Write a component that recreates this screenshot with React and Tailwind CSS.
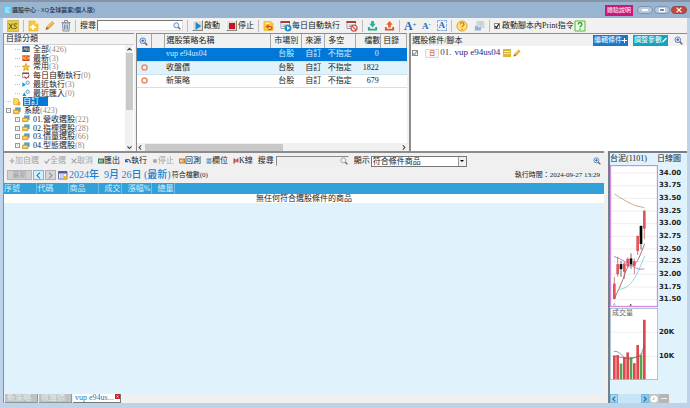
import React, { useState } from "react";

const strategies = [
  { name: "vup e94us04", market: "台股", source: "自訂", side: "不指定", count: 0 },
  { name: "收盤價", market: "台股", source: "自訂", side: "不指定", count: 1822 },
  { name: "新策略", market: "台股", source: "自訂", side: "不指定", count: 679 },
];

const tree = [
  { label: "全部", count: 426, icon: "all", level: 1 },
  { label: "最新", count: 3, icon: "new", level: 1 },
  { label: "常用", count: 3, icon: "star", level: 1 },
  { label: "每日自動執行", count: 0, icon: "daily", level: 1 },
  { label: "最近執行", count: 3, icon: "run", level: 1 },
  { label: "最近匯入", count: 0, icon: "import", level: 1 },
  { label: "自訂", icon: "custom", level: 0 },
  { label: "系統", count: 423, icon: "folder", level: 0, expand: "-" },
  { label: "01.營收選股", count: 22, icon: "folder", level: 1, expand: "+" },
  { label: "02.指標選股", count: 28, icon: "folder", level: 1, expand: "+" },
  { label: "03.價量選股", count: 66, icon: "folder", level: 1, expand: "+" },
  { label: "04.型態選股", count: 8, icon: "folder", level: 1, expand: "+" },
];

const prices = ["34.00", "33.75", "33.50", "33.25", "33.00", "32.75", "32.50", "32.25", "32.00", "31.75", "31.50"];

// x, wick top, body top, body bottom, wick bottom, up
const candles = [
  [40, 380, 400, 446, 446, true],
  [50, 320, 342, 372, 380, true],
  [60, 333, 342, 357, 380, false],
  [70, 335, 340, 365, 386, true],
  [80, 322, 326, 348, 352, true],
  [90, 310, 325, 343, 356, false],
  [100, 325, 333, 348, 372, true],
  [110, 256, 258, 303, 315, true],
  [120, 226, 228, 282, 298, false],
  [130, 180, 183, 236, 267, true],
];

const volumes = [
  [40, 181, true],
  [50, 180, true],
  [60, 205, false],
  [70, 186, true],
  [80, 172, true],
  [90, 187, false],
  [100, 204, true],
  [110, 150, true],
  [120, 180, false],
  [130, 75, true],
];

const Magnifier = ({ className = "w-2 h-2", color = "#4c7fc0", plus }) => (
  <svg viewBox="0 0 24 24" className={`shrink-0 ${className}`} fill="none">
    <path d="M15 15l7 7" stroke="#8a5a4a" strokeWidth="4" />
    <circle cx="10" cy="10" r="7.5" fill="#e8f2fc" stroke={color} strokeWidth="2.5" />
    {plus && <path d="M6 10h8M10 6v8" stroke="#2a5ca8" strokeWidth="2.5" />}
  </svg>
);

const Pencil = ({ className = "w-[10px] h-[11px]", color = "#f0a92c" }) => (
  <svg viewBox="0 0 24 24" className={`shrink-0 ${className}`}>
    <path d="M2 22l2-7L17 2l5 5L9 20z" fill={color} stroke="#c48a35" strokeWidth="1" />
    <path d="M2 22l2-7 5 5z" fill="#7d6a4c" />
    <path d="M6 16L18 4" stroke="#ffe48c" strokeWidth="2" />
  </svg>
);

const XsIcon = () => (
  <svg viewBox="0 0 24 24" className="w-3 h-3 shrink-0">
    <path d="M1 1h22v22H1z" fill="#e8cb3c" stroke="#b39a26" strokeWidth="1" />
    <path d="M4 7l7 11M11 7L4 18M20 8c-6-2-8 3-4 4s5 6-3 5" fill="none" stroke="#5c5321" strokeWidth="2" />
  </svg>
);

const AddIcon = () => (
  <svg viewBox="0 0 24 24" className="w-[11px] h-3 shrink-0">
    <path d="M2 1h13l7 7v15H2z" fill="#fbc83a" stroke="#e0a51c" />
    <path d="M15 1v7h7" fill="#fff3bd" stroke="#e0a51c" />
    <path d="M11 9v11M5 14.500h12" stroke="#fff" strokeWidth="4" />
  </svg>
);

const TrashIcon = () => (
  <svg viewBox="0 0 20 24" className="w-[10px] h-3 shrink-0" fill="none" stroke="#8793a3" strokeWidth="2">
    <path d="M3 6l1 16h12l1-16z" fill="#dce3ea" />
    <path d="M1 5h18M7 4V1h6v3M7 9v10M10 9v10M13 9v10" />
  </svg>
);

const BackIcon = () => (
  <svg viewBox="0 0 24 24" className="w-[11px] h-3 shrink-0">
    <path d="M2 2h15l5 5v15H2z" fill="#f7c935" stroke="#d6a21c" />
    <path d="M8 13h8c5 0 5 7-1 7h-3" fill="none" stroke="#d3492c" strokeWidth="2.500" />
    <path d="M12 8l-6 5 6 5z" fill="#d3492c" />
    <path d="M5 6h10" stroke="#fff3bd" strokeWidth="3" />
  </svg>
);

const CalendarIcon = ({ blocked, className = "w-3 h-3" }) => (
  <svg viewBox="0 0 24 24" className={`shrink-0 ${className}`}>
    <path d="M2 3h17v14H2z" fill="#fff" stroke="#7b7f8c" strokeWidth="1.500" />
    <path d="M1 2h19v4H1z" fill="#b33a3a" />
    <path d="M5 10h10M5 13h6" stroke="#9aa" strokeWidth="2" />
    {blocked ? (
      <g fill="#fff" stroke="#d65050" strokeWidth="2.500">
        <circle cx="16" cy="16" r="6" />
        <path d="M12 12l8 8" />
      </g>
    ) : (
      <g>
        <circle cx="16" cy="16" r="7" fill="#2395c4" />
        <path d="M14 12l6 4-6 4z" fill="#fff" />
      </g>
    )}
  </svg>
);

const TrayIcon = ({ up }) => (
  <svg viewBox="0 0 24 24" className="w-[11px] h-3 shrink-0">
    <path d="M2 14v8h20v-8h-4v4H6v-4z" fill={up ? "#d8552d" : "#2aa58b"} />
    <path d={up ? "M12 1l7 8h-4v6H9V9H5z" : "M12 15l7-8h-4V1H9v6H5z"} fill={up ? "#e2622f" : "#2bb09a"} />
  </svg>
);

const HelpIcon = ({ square }) => (
  <svg viewBox="0 0 24 24" className="w-3 h-3 shrink-0">
    {square ? (
      <path d="M2 2h20v20H2z" fill="#eafbe4" stroke="#55b83e" strokeWidth="2" />
    ) : (
      <circle cx="12" cy="12" r="10" fill="#ffe27a" stroke="#dfa02a" strokeWidth="2" />
    )}
    <path
      d="M8.500 9c0-5 7.500-4.500 7.500-.5 0 3-4 3-4 6M12 17v2.500"
      fill="none"
      stroke={square ? "#249a18" : "#c8811c"}
      strokeWidth="2.500"
    />
  </svg>
);

const SaveIcon = () => (
  <svg viewBox="0 0 24 24" className="w-[11px] h-3 shrink-0">
    <path d="M6 2h16v14H6z" fill="#d8dce2" stroke="#b9c0c8" />
    <path d="M9 5h10M9 8h10M15 2v14" stroke="#b4bac4" />
    <path d="M2 12h5l2 3h6v7H2z" fill="#8eb2d8" />
  </svg>
);

const TreeIcon = ({ type }) => (
  <svg viewBox="0 0 24 24" className="w-2 h-2 shrink-0">
    {type === "all" && (
      <g>
        <path d="M1 4h22v17H1z" fill="#1d4f9e" />
        <path d="M5 16l3-8 3 8M13 8v8h3M18 8v8h3" stroke="#f3e9a0" strokeWidth="2" fill="none" />
      </g>
    )}
    {type === "new" && (
      <g>
        <path d="M1 4h22v17H1z" fill="#d4471c" />
        <path d="M4 16V8l4 8V8M15 8h-4v8h4M17 8l1 8 2-5 2 5V8" stroke="#ffd86b" strokeWidth="2" fill="none" />
      </g>
    )}
    {type === "star" && (
      <path d="M12 1l3 8 8 .5-6 5 2 8.500-7-5-7 5 2-8.500-6-5L9 9z" fill="#ffc52e" stroke="#d48e14" strokeWidth="2" />
    )}
    {type === "daily" && (
      <g>
        <path d="M2 3h18v14H2z" fill="#fff" stroke="#666" strokeWidth="2" />
        <path d="M1 2h20v4H1z" fill="#a83838" />
        <path d="M8 13l4 7 10-9" stroke="#c83232" strokeWidth="3" fill="none" />
      </g>
    )}
    {(type === "run" || type === "import") && (
      <g>
        <path d={type === "run" ? "M1 7l11 7-11 7z" : "M1 21l6-11 6 11z"} fill="#1c9bd0" />
        <circle cx="17" cy="8" r="5" fill="#e8f4fb" stroke="#4f94b8" strokeWidth="2.500" />
      </g>
    )}
    {type === "custom" && (
      <g>
        <path d="M2 2h12l4 4v14H2z" fill="#ffd95a" stroke="#dd9d1c" strokeWidth="2" />
        <path d="M14 12h8v10h-8z" fill="#f6a52a" />
      </g>
    )}
    {type === "folder" && (
      <g>
        <path d="M7 2h15v12H7z" fill="#4fa5d6" stroke="#2e7fb3" />
        <path d="M1 9h17v11H1z" fill="#f3c13a" stroke="#bd8d1c" strokeWidth="2" />
        <path d="M4 14h11" stroke="#fff2b8" strokeWidth="2" />
      </g>
    )}
  </svg>
);

const Sep = () => <span className="w-px h-3 mx-1 bg-[#bdbdbd] shrink-0" />;

const IconButton = ({ label, children }) => (
  <button type="button" aria-label={label} className="shrink-0 flex items-center">
    {children}
  </button>
);

const TitleBar = () => (
  <header className="h-[18px] shrink-0 flex items-center bg-[#99b4d1] border-t-2 border-[#8595a6] pl-1 pr-[3px] text-[6px] text-[#1c2e44]">
    <svg viewBox="0 0 14 16" className="w-[7px] h-2 mr-px">
      <path d="M0 0h14v16H0z" fill="#63c8ec" />
      <path d="M2 4h10M2 8h7M2 12h10" stroke="#d9f4ff" strokeWidth="2" />
    </svg>
    <h1 className="flex-1 font-medium font-['Open_Sans','Noto_Sans_CJK_TC',sans-serif]">選股中心 - XQ全球贏家(個人版)</h1>
    <button type="button" className="h-[11px] w-7 mr-1 bg-[#c9187a] text-white leading-[11px]">
      體驗說明
    </button>
    <div className="flex gap-px">
      <button type="button" aria-label="最小化" className="w-4 h-2 rounded-sm border border-[#7d93ad] bg-[#b5c9df] flex items-center justify-center">
        <span className="w-[6px] h-[2px] bg-white" />
      </button>
      <button type="button" aria-label="最大化" className="w-4 h-2 rounded-sm border border-[#7d93ad] bg-[#b5c9df] flex items-center justify-center">
        <span className="w-[6px] h-1 border border-white bg-[#7388a1]" />
      </button>
      <button type="button" aria-label="關閉" className="w-4 h-2 rounded-sm border border-[#8e4a48] bg-[#c9483c] flex items-center justify-center">
        <svg viewBox="0 0 10 10" className="w-[6px] h-[6px]">
          <path d="M1 1l8 8M9 1L1 9" stroke="#fff" strokeWidth="2" />
        </svg>
      </button>
    </div>
  </header>
);

const Toolbar = () => {
  const [print, setPrint] = useState(true);

  return (
    <div className="h-[15px] shrink-0 flex items-center bg-[#f1f1f1] pl-1 whitespace-nowrap leading-3">
      <IconButton label="XS">
        <XsIcon />
      </IconButton>
      <Sep />
      <div className="flex items-center gap-[6px]">
        <IconButton label="新增"><AddIcon /></IconButton>
        <IconButton label="編輯"><Pencil /></IconButton>
        <IconButton label="刪除"><TrashIcon /></IconButton>
      </div>
      <Sep />
      <label htmlFor="search" className="mr-px">搜尋</label>
      <div className="flex items-center w-[86px] h-[11px] bg-white border border-[#777] border-r-[#ddd] border-b-[#ddd] pr-px">
        <input id="search" type="text" className="flex-1 min-w-0 h-full outline-none" />
        <Magnifier />
      </div>
      <Sep />
      <div className="flex items-center gap-[6px]">
        <button type="button" className="flex items-center gap-px">
          <span className="w-[11px] h-[11px] flex items-center justify-center bg-[#dcdcdc] border border-[#f8f8f8] border-r-[#888] border-b-[#888]">
            <svg viewBox="0 0 10 10" className="w-2 h-2">
              <path d="M2 0l7 5-7 5z" fill="#1b87c9" />
            </svg>
          </span>
          啟動
        </button>
        <button type="button" className="flex items-center gap-px">
          <span className="w-[11px] h-[11px] flex items-center justify-center bg-[#dcdcdc] border border-[#f8f8f8] border-r-[#888] border-b-[#888]">
            <span className="w-[6px] h-[6px] bg-[#c8141e]" />
          </span>
          停止
        </button>
      </div>
      <Sep />
      <div className="flex items-center gap-[6px]">
        <IconButton label="還原"><BackIcon /></IconButton>
        <button type="button" className="flex items-center">
          <CalendarIcon />
          每日自動執行
        </button>
        <IconButton label="取消自動執行"><CalendarIcon blocked /></IconButton>
      </div>
      <Sep />
      <div className="flex items-center gap-[6px]">
        <IconButton label="匯入"><TrayIcon /></IconButton>
        <IconButton label="匯出"><TrayIcon up /></IconButton>
      </div>
      <Sep />
      <div className="flex items-center gap-[6px] font-bold text-[#2364b5] font-['Liberation_Serif',serif]">
        <button type="button" className="text-[12px]">A<sup className="text-[6px]">+</sup></button>
        <button type="button" className="text-[9px]">A<sup className="text-[6px]">-</sup></button>
        <button type="button" className="text-[9px] px-px border border-dashed border-[#8db0dc] leading-[9px]">A</button>
      </div>
      <Sep />
      <div className="flex items-center gap-[6px]">
        <IconButton label="說明"><HelpIcon /></IconButton>
        <IconButton label="儲存"><SaveIcon /></IconButton>
      </div>
      <Sep />
      <label className="flex items-center gap-[2px]">
        <CheckBox checked={print} onChange={() => setPrint(!print)} />
        啟動腳本內Print指令
      </label>
      <IconButton label="指令說明"><HelpIcon square /></IconButton>
    </div>
  );
};

const CheckBox = ({ checked, onChange, label, mark = "#222" }) => (
  <span className="relative w-[6px] h-[6px] shrink-0">
    <input
      type="checkbox"
      aria-label={label}
      checked={checked}
      onChange={onChange}
      className="block appearance-none w-[6px] h-[6px] bg-white border border-[#888]"
    />
    {checked && (
      <svg viewBox="0 0 10 10" className="absolute inset-0 pointer-events-none">
        <path d="M2 5l2 3 4-6" fill="none" stroke={mark} strokeWidth="2" />
      </svg>
    )}
  </span>
);

const DirectoryTree = () => {
  const [selected, setSelected] = useState("自訂");

  return (
    <section className="w-[131px] shrink-0 flex flex-col bg-white border-t border-l border-[#8c8c8c]">
      <h2 className="h-[11px] shrink-0 px-[2px] leading-[10px] bg-[#f4f4f4] border-b border-[#cfcfcf]">目錄分類</h2>
      <div className="flex-1 min-h-0 flex">
        <ul className="flex-1 min-w-0 flex flex-col pl-px pb-px whitespace-nowrap">
          {tree.map((item) => (
            <li key={item.label} className="flex-1 min-h-0 flex items-center">
              <span className={`shrink-0 flex items-center justify-end ${item.level ? "w-[15px]" : "w-[6px]"}`}>
                {item.expand ? (
                  <span className="w-[5px] h-[5px] border border-[#999] flex items-center justify-center text-[5px] leading-none">
                    {item.expand}
                  </span>
                ) : (
                  <span className="w-[5px] border-t border-dotted border-[#bbb]" />
                )}
              </span>
              <button type="button" onClick={() => setSelected(item.label)} className="flex items-center leading-[9px] ml-[2px]">
                <TreeIcon type={item.icon} />
                <span className={selected === item.label ? "bg-[#0078d7] text-white ml-[2px] pr-[9px]" : "ml-[3px]"}>
                  {item.label}
                </span>
                {item.count !== undefined && <span className="text-[#8a8a8a]">({item.count})</span>}
              </button>
            </li>
          ))}
        </ul>
        <div className="w-[8px] mr-px shrink-0 flex flex-col items-center bg-[#f1f1f1]">
          <Chevron className="h-[8px]" d="M2 7l3-3 3 3" />
          <span className="w-[7px] flex-1 bg-[#c9c9c9]" />
          <span className="h-[33px]" />
          <Chevron className="h-[8px]" d="M2 4l3 3 3-3" />
        </div>
      </div>
    </section>
  );
};

const Chevron = ({ d, className = "" }) => (
  <svg viewBox="0 0 10 10" className={`w-[7px] shrink-0 ${className}`}>
    <path d={d} fill="none" stroke="#444" strokeWidth="1.500" />
  </svg>
);

const StrategyTable = () => {
  const [active, setActive] = useState(0);

  return (
    <section className="flex-[49] min-w-0 flex flex-col bg-white border-t border-l border-[#8c8c8c]">
      <table className="w-full table-fixed border-collapse whitespace-nowrap text-left">
        <colgroup>
          <col className="w-[14px]" />
          <col className="w-[13px]" />
          <col />
          <col className="w-[31px]" />
          <col className="w-[23px]" />
          <col className="w-[31px]" />
          <col className="w-[25px]" />
          <col className="w-[26px]" />
        </colgroup>
        <thead>
          <tr className="h-[14px] bg-[#f1f1f1] leading-[12px] [&>th]:font-normal [&>th]:p-0 [&>th]:border-r [&>th]:border-[#a8a8a8]">
            <th><Magnifier plus className="w-[9px] h-[9px] ml-[2px]" /></th>
            <th />
            <th><span className="pl-[2px]">選股策略名稱</span></th>
            <th className="text-center">市場別</th>
            <th className="text-center">來源</th>
            <th><span className="pl-[3px]">多空</span></th>
            <th className="text-right">檔數</th>
            <th><span className="pl-[2px]">目錄</span></th>
          </tr>
        </thead>
        <tbody>
          {strategies.map((s, i) => (
            <tr
              key={s.name}
              onClick={() => setActive(i)}
              className={`h-[13px] leading-[12px] border-b border-[#cfe3ee] [&>td]:p-0 ${
                active === i ? "bg-[#0078d7] text-[#d8ecff]" : i % 2 ? "bg-[#e0f3fd]" : ""
              }`}
            >
              <td>
                {active !== i && (
                  <svg viewBox="0 0 14 14" className="w-[7px] h-[7px] ml-1">
                    <circle cx="7" cy="7" r="5" fill="#fff" stroke="#ec8a68" strokeWidth="3" />
                  </svg>
                )}
              </td>
              <td />
              <td><span className="pl-[2px]">{s.name}</span></td>
              <td className="text-center">{s.market}</td>
              <td className="text-center">{s.source}</td>
              <td><span className="pl-[3px]">{s.side}</span></td>
              <td className="text-right"><span className="pr-[2px]">{s.count}</span></td>
              <td />
            </tr>
          ))}
        </tbody>
      </table>
      <div className="mt-auto h-[8px] shrink-0 flex items-center bg-[#f1f1f1]">
        <Chevron d="M6 2L3 5l3 3" />
        <span className="ml-px w-[51%] h-[7px] bg-[#c9c9c9]" />
        <span className="flex-1" />
        <Chevron d="M4 2l3 3-3 3" />
      </div>
    </section>
  );
};

const ConditionPanel = () => {
  const [enabled, setEnabled] = useState(true);

  return (
    <section className="flex-[50] min-w-0 bg-white border-t border-l-2 border-[#8c8c8c]">
      <div className="h-[12px] flex items-center bg-[#f1f1f1] leading-[11px] pr-1">
        <h2 className="flex-1 pl-px">選股條件/腳本</h2>
        <button type="button" className="h-[11px] w-[35px] mr-[5px] bg-[#1a78cc] text-white text-[7px] flex items-center justify-center">
          編輯條件
          <svg viewBox="0 0 10 10" className="w-[5px] h-[5px]">
            <path d="M5 0v10M0 5h10" stroke="#fff" strokeWidth="2" />
          </svg>
        </button>
        <button type="button" className="h-[11px] w-[35px] mr-[6px] bg-[#0fa5bd] text-white text-[7px] flex items-center justify-center">
          調整參數
          <svg viewBox="0 0 10 10" className="w-[5px] h-[6px]">
            <path d="M1 9l8-8" stroke="#fff" strokeWidth="3" />
          </svg>
        </button>
        <Magnifier plus className="w-[9px] h-[9px]" />
      </div>
      <div className="flex items-center h-[14px] pl-px text-[9px] font-['Liberation_Serif','Noto_Sans_CJK_TC',serif]">
        <CheckBox mark="#999" label="01. vup e94us04" checked={enabled} onChange={() => setEnabled(!enabled)} />
        <span className="ml-[7px] w-[14px] h-[9px] text-[6px] leading-[7px] text-center text-[#c0392b] border border-[#dadada] bg-[#faf6f6]">日</span>
        <span className="ml-px text-[#444]">01.</span>
        <a href="#script" className="ml-[3px] text-[#25258f]">vup e94us04</a>
        <svg viewBox="0 0 16 16" className="w-2 h-2 ml-[3px]">
          <path d="M0 0h16v16H0z" fill="#d9b83c" />
          <path d="M2 5h12M2 9h12" stroke="#f5e6a4" strokeWidth="2" />
        </svg>
        <Pencil className="w-2 h-2 ml-[2px]" />
      </div>
    </section>
  );
};

const actions = [
  { label: "加自選", disabled: true, d: "M5 1v8M1 5h8", color: "#a5a5a5" },
  { label: "全選", disabled: true, d: "M1 5l3 4 5-7", color: "#a5a5a5" },
  { label: "取消", disabled: true, d: "M1 1l8 8M9 1L1 9", color: "#a5a5a5" },
  { label: "匯出", d: "M1 2h8v6H1zM3 5h6", color: "#2d7a54" },
  { label: "執行", d: "M1 2v4h4M1 6c2-5 7-5 8 2", color: "#2b62b5" },
  { label: "停止", disabled: true, d: "M2 3h6M2 5h6M2 7h6", color: "#a5a5a5" },
  { label: "回測", d: "M1 2h8v6H1zM4 5h5", color: "#d9782a" },
  { label: "欄位", d: "M1 2h8M1 5h8M1 8h8", color: "#3f83bd" },
  { label: "K線", d: "M2 1v8M5 2v5M8 1v6", color: "#b3262b" },
];

const ResultPanel = () => {
  const [filter, setFilter] = useState("符合條件商品");

  return (
    <section className="flex-1 min-w-0 flex flex-col bg-[#f0f0f0] border-t-2 border-l border-[#8c8c8c]">
      <div className="h-[14px] shrink-0 mt-px flex items-center gap-[5px] pl-[5px] pr-[3px] whitespace-nowrap leading-3">
        {actions.map((a) => (
          <button
            key={a.label}
            type="button"
            disabled={a.disabled}
            className={`flex items-center ${a.disabled ? "text-[#a5a5a5]" : ""}`}
          >
            <svg viewBox="0 0 10 10" className="w-[6px] h-[6px]">
              <path d={a.d} fill="none" stroke={a.color} strokeWidth="2" />
            </svg>
            {a.label}
          </button>
        ))}
        <div className="flex items-center gap-[2px]">
          <label htmlFor="result-search">搜尋</label>
          <div className="flex items-center w-[73px] h-[10px] border border-[#8a8a8a] border-r-[#eee] border-b-[#eee] bg-[#efefef]">
            <input id="result-search" type="text" className="flex-1 min-w-0 h-full outline-none bg-transparent" />
            <Magnifier color="#999" />
          </div>
        </div>
        <div className="flex items-center gap-px">
          <label htmlFor="filter">顯示</label>
          <div className="relative flex w-24 h-[11px] bg-white border border-[#777]">
            <select
              id="filter"
              value={filter}
              onChange={(e) => setFilter(e.target.value)}
              className="appearance-none w-full h-full pl-px outline-none text-[8px] leading-[9px]"
            >
              <option>符合條件商品</option>
            </select>
            <span className="absolute right-0 inset-y-0 w-2 flex items-center justify-center bg-[#f0f0f0] border-l border-[#999] pointer-events-none">
              <svg viewBox="0 0 8 4" className="w-1 h-[2px]">
                <path d="M0 0h8L4 4z" fill="#000" />
              </svg>
            </span>
          </div>
        </div>
        <Magnifier plus className="w-2 h-2 ml-auto" />
      </div>

      <div className="h-[14px] shrink-0 flex items-center pl-[3px] pr-1 whitespace-nowrap leading-3">
        <button type="button" disabled className="w-[25px] h-[10px] leading-[9px] mr-px bg-[#cfcfcf] border border-[#b5b5b5] text-[#a0a0a0] text-[7px] flex items-center justify-center">
          最新
        </button>
        <button type="button" aria-label="前一日" className="w-[11px] h-[10px] mr-px bg-[#d5eefa] border border-[#85b4cc] flex items-center justify-center">
          <svg viewBox="0 0 10 10" className="w-[7px] h-[7px]">
            <path d="M7 1L3 5l4 4" fill="none" stroke="#1674b8" strokeWidth="1.500" />
          </svg>
        </button>
        <button type="button" aria-label="後一日" disabled className="w-[11px] h-[10px] mr-[2px] bg-[#d6d6d6] border border-[#b0b0b0] flex items-center justify-center">
          <svg viewBox="0 0 10 10" className="w-[7px] h-[7px]">
            <path d="M3 1l4 4-4 4" fill="none" stroke="#888" strokeWidth="1.500" />
          </svg>
        </button>
        <svg viewBox="0 0 20 20" className="w-[10px] h-[10px] mr-px">
          <path d="M1 3h17v15H1z" fill="#eef" stroke="#6b6bb0" strokeWidth="2" />
          <path d="M1 2h17v5H1z" fill="#5757a5" />
          <path d="M4 10h3M9 10h3M4 14h3M9 14h3" stroke="#8b8bc0" strokeWidth="2" />
          <path d="M12 12h7v7h-7z" fill="#e5b83c" />
        </svg>
        <span className="text-[10px] font-medium text-[#1f7fd0]">2024年&nbsp; 9月 26日 (最新)</span>
        <span className="ml-px text-[7px]">符合檔數(0)</span>
        <span className="ml-auto text-[7px]">執行時間：2024-09-27 13:29</span>
      </div>

      <div className="flex-1 min-h-0 bg-[#e0f3fd] mt-px">
        <table className="w-full table-fixed border-collapse whitespace-nowrap">
          <colgroup>
            <col className="w-8" />
            <col className="w-8" />
            <col className="w-[30px]" />
            <col className="w-[23px]" />
            <col className="w-[30px]" />
            <col className="w-[23px]" />
            <col />
          </colgroup>
          <thead>
            <tr className="h-[11px] leading-[10px] bg-[#32a1da] text-[#d7f0fd] text-left [&>th]:font-normal [&>th]:p-0 [&>th:not(:last-child)]:border-r [&>th]:border-[#6fbde4]">
              <th>序號</th>
              <th><span className="pl-px">代碼</span></th>
              <th><span className="pl-px">商品</span></th>
              <th className="text-right">成交</th>
              <th className="text-right">漲幅%</th>
              <th className="text-right">總量</th>
              <th />
            </tr>
          </thead>
          <tbody>
            <tr className="h-[9px] leading-[9px] bg-white">
              <td colSpan={7} className="p-0 text-center">無任何符合選股條件的商品</td>
            </tr>
          </tbody>
        </table>
      </div>

      <div className="h-[9px] shrink-0 flex gap-px text-[8px] leading-[8px] pl-px">
        <button type="button" className="w-[33px] pl-[2px] text-left bg-[#bac4c4] text-[#e6ecec] border-r border-b border-[#8c9696]">新策略</button>
        <button type="button" className="w-[33px] pl-[2px] text-left bg-[#bac4c4] text-[#e6ecec] border-r border-b border-[#8c9696]">收盤價</button>
        <button type="button" className="w-[48px] pl-[2px] flex items-start justify-between bg-white text-[#3572ae] border-r border-b border-[#777] font-['Liberation_Serif',serif]">
          vup e94us...
          <svg viewBox="0 0 10 10" className="w-[5px] h-[5px]">
            <path d="M0 0h10v10H0z" fill="#c8202c" />
            <path d="M3 3l4 4M7 3L3 7" stroke="#fff" strokeWidth="1.500" />
          </svg>
        </button>
      </div>
    </section>
  );
};

const PriceChart = () => (
  <svg viewBox="27 46 144 424" className="w-12 h-[142px] shrink-0 bg-white" preserveAspectRatio="none">
    {prices.map((p, i) => (
      <path key={p} d={`M27 ${70 + i * 37.8}h144`} stroke="#e6e6e6" strokeWidth="2" />
    ))}
    {candles.map(([x, top, open, close, bottom, up]) => (
      <g key={x}>
        <path d={`M${x} ${top}V${bottom}`} stroke={up ? "#b5474b" : "#222"} strokeWidth="2" />
        <rect x={x - 4} y={open} width="8" height={close - open} fill={up ? "#e4545a" : "#000"} />
      </g>
    ))}
    <path d="M40 132C60 146 85 160 105 168l25 5" fill="none" stroke="#bd9d7b" strokeWidth="2.500" />
    <path d="M39 447C52 420 64 395 72 370S88 345 98 343s20-28 33-62" fill="none" stroke="#9c5261" strokeWidth="2.500" />
    <path d="M50 417C75 420 96 395 106 375s16-36 25-57" fill="none" stroke="#6fd1ce" strokeWidth="2.500" />
    <path d="M39 319C60 326 83 341 98 350s22 7 32 6" fill="none" stroke="#ae6bc4" strokeWidth="2.500" />
    <path d="M37 466l3-7 3 7" fill="none" stroke="#4bb6b2" strokeWidth="2" />
    <path d="M86 469l3-8 3 8" fill="none" stroke="#333" strokeWidth="2" />
    <rect x="28.500" y="47.500" width="141" height="421" fill="none" stroke="#d38adf" strokeWidth="4" />
  </svg>
);

const VolumeChart = () => (
  <svg viewBox="27 40 144 214" className="w-12 h-[72px] shrink-0 bg-white" preserveAspectRatio="none">
    <path d="M27 112h144M27 184h144" stroke="#e6e6e6" strokeWidth="2" />
    {volumes.map(([x, top, up]) => (
      <rect key={x} x={x - 4} y={top} width="8" height={252 - top} fill={up ? "#e0474e" : "#55a350"} />
    ))}
    <path d="M38 170C52 165 60 180 70 187s25 4 38-2 16-15 22-36" fill="none" stroke="#55607a" strokeWidth="2" />
    <path d="M38 183C60 186 75 192 92 188s25 4 38-22" fill="none" stroke="#a9564a" strokeWidth="2" />
    <rect x="28" y="41" width="142" height="212" fill="none" stroke="#8aa7b8" strokeWidth="2" />
  </svg>
);

const ChartPanel = () => (
  <aside className="w-[79px] shrink-0 flex flex-col bg-[#e0f3fd] border-t-2 border-l-2 border-[#70808c]">
    <div className="h-[12px] shrink-0 flex items-center justify-between pr-[6px] whitespace-nowrap">
      <h2>台泥(1101)</h2>
      <span>日線圖</span>
    </div>
    <div className="flex items-start">
      <PriceChart />
      <ol className="h-[139px] mt-[2px] ml-px flex flex-col text-[7px] leading-none font-bold font-['DejaVu_Sans',sans-serif]">
        {prices.map((p) => (
          <li key={p} className="flex-1 flex items-center">{p}</li>
        ))}
      </ol>
    </div>
    <div className="flex mt-px">
      <div className="relative">
        <VolumeChart />
        <span className="absolute left-[2px] top-px text-[7px] leading-[8px] text-[#666]">成交量</span>
      </div>
      <ol className="h-12 mt-3 ml-px flex flex-col text-[7px] leading-none font-bold font-['DejaVu_Sans',sans-serif]">
        <li className="flex-1 flex items-center">20K</li>
        <li className="flex-1 flex items-center">10K</li>
      </ol>
    </div>
    <div className="mt-auto h-[9px] flex items-stretch text-[#1c86c8]">
      <button type="button" aria-label="往左" className="w-2 bg-[#a6d6f0] border border-[#7fb9d8]">
        <svg viewBox="0 0 10 10"><path d="M7 1L3 5l4 4" fill="none" stroke="#1674b8" strokeWidth="2" /></svg>
      </button>
      <span className="w-[23px] bg-[#c6e6f7]" />
      <button type="button" aria-label="往右" className="w-2 bg-[#8cc8ea] border border-[#7fb9d8]">
        <svg viewBox="0 0 10 10"><path d="M3 1l4 4-4 4" fill="none" stroke="#1674b8" strokeWidth="2" /></svg>
      </button>
      <button type="button" aria-label="放大" className="w-[10px] bg-[#c4c4c4] flex items-center justify-center">
        <svg viewBox="0 0 16 16" className="w-2 h-2">
          <circle cx="8" cy="8" r="7" fill="#fff" />
          <path d="M8 4v5H5" fill="none" stroke="#bbb" strokeWidth="2" />
        </svg>
      </button>
      <button type="button" aria-label="縮小" className="w-[10px] bg-[#b5b5b5] flex items-center justify-center">
        <span className="w-[6px] h-px bg-[#eee]" />
      </button>
    </div>
  </aside>
);

const App = () => {
  return (
    <div className="h-screen w-full flex flex-col overflow-hidden bg-[#bdd3ea] text-[8px] text-[#222] font-['Liberation_Serif','Noto_Sans_CJK_TC',serif]">
      <TitleBar />
      <main className="flex-1 min-h-0 flex flex-col px-[3px] pb-[5px]">
        <Toolbar />
        <div className="h-[118px] shrink-0 flex gap-[2px] bg-[#f0f0f0]">
          <DirectoryTree />
          <StrategyTable />
          <ConditionPanel />
        </div>
        <div className="flex-1 min-h-0 flex gap-1 bg-[#f0f0f0]">
          <ResultPanel />
          <ChartPanel />
        </div>
      </main>
    </div>
  );
};

export default App;
